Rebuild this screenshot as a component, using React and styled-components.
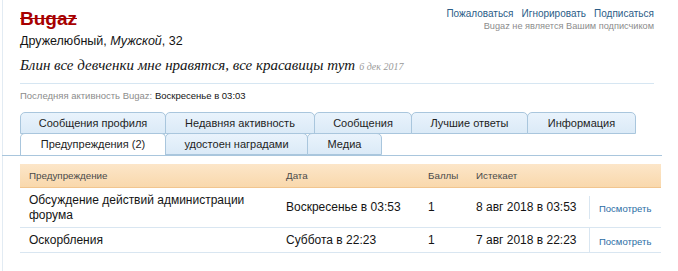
import React from 'react';
import styled, { createGlobalStyle } from 'styled-components';

const GlobalStyle = createGlobalStyle`
  body {
    margin: 0;
    background: #fff;
    font-family: "Liberation Sans", Arial, sans-serif;
    color: #141414;
  }
`;

const Page = styled.div`
  width: 678px;
  height: 271px;
  overflow: hidden;
  box-sizing: border-box;
  padding-left: 2px;
`;

const Frame = styled.div`
  border-left: 1px solid #e2ebf3;
  padding: 7px 16px 0 17px;
  height: 100%;
  box-sizing: border-box;
`;

const Header = styled.div`
  display: flex;
  justify-content: space-between;
  padding-right: 8px;
`;

const UserName = styled.h1`
  margin: 0;
  font-family: "Liberation Sans", Arial, sans-serif;
  font-size: 19px;
  line-height: 24px;
  font-weight: bold;
  color: #a70000;
  text-decoration: line-through;
`;

const Info = styled.div`
  font-size: 12.5px;
  line-height: 16px;
  margin-top: 2px;
  em { font-style: italic; }
`;

const Actions = styled.div`
  text-align: right;
`;

const LinkRow = styled.div`
  display: flex;
  gap: 8px;
  justify-content: flex-end;
`;

const ActionLink = styled.a`
  font-size: 10px;
  line-height: 13px;
  color: #2b5d87;
  text-decoration: none;
`;

const FollowNote = styled.div`
  font-size: 9.2px;
  line-height: 12px;
  color: #8c8c8c;
`;

const Status = styled.div`
  font-family: "Liberation Serif", "DejaVu Serif", serif;
  font-style: italic;
  font-size: 15px;
  line-height: 18px;
  margin-top: 7px;
  color: #141414;
`;

const StatusDate = styled.span`
  font-size: 10px;
  color: #9a9a9a;
  margin-left: 4px;
`;

const Divider = styled.hr`
  border: 0;
  border-top: 1px solid #d6e6f2;
  margin: 7px 8px 0 0;
`;

const LastSeen = styled.div`
  font-size: 9.5px;
  line-height: 13px;
  margin-top: 5px;
  color: #8c8c8c;
  span { color: #141414; }
`;

const TabBar = styled.div`
  margin: 10px 0 0 -18px;
  padding-left: 18px;
  border-bottom: 1px solid #a9c6dd;
`;

const TabRow = styled.div`
  display: flex;
  margin-top: ${p => (p.$back ? '0' : '-1px')};
`;

const Tab = styled.div`
  width: ${p => p.$w}px;
  box-sizing: border-box;
  height: 22px;
  margin-bottom: ${p => (p.$active ? '-1px' : '0')};
  border: 1px solid #a9c6dd;
  border-bottom: ${p => (p.$active ? 'none' : '1px solid #a9c6dd')};
  border-radius: 5px 5px 0 0;
  margin-right: -1px;
  background: ${p => (p.$active ? '#fff' : 'linear-gradient(#e9f3fc, #dbeaf7)')};
  font-size: 11px;
  line-height: 20px;
  text-align: center;
  color: #1e1e1e;
  position: relative;
  z-index: ${p => (p.$active ? 2 : 1)};
`;

const Table = styled.table`
  width: 641px;
  margin-top: 8px;
  border-collapse: collapse;
  table-layout: fixed;
`;

const HeadCell = styled.th`
  width: ${p => p.$w}px;
  box-sizing: border-box;
  background: linear-gradient(#fce6c9, #f9d8ac);
  border-bottom: 1px solid #f1c58f;
  font-weight: normal;
  text-align: left;
  font-size: 9.8px;
  color: #4a4a4a;
  height: 23px;
  padding: 0 0 0 9px;
`;

const Row = styled.tr`
  border-bottom: 1px solid #d9e6f1;
`;

const Cell = styled.td`
  font-size: 12px;
  line-height: 15px;
  padding: 5px 6px 4px 9px;
  height: ${p => p.$h}px;
  box-sizing: border-box;
  vertical-align: middle;
`;

const ViewCell = styled.td`
  padding: 0 0 0 10px;
  vertical-align: middle;
  position: relative;
  &::before {
    content: '';
    position: absolute;
    left: 0;
    top: ${p => p.$inset}px;
    bottom: ${p => p.$inset}px;
    border-left: 1px solid #d9e6f1;
  }
`;

const ViewLink = styled.a`
  font-size: 9.5px;
  color: #2b6ea5;
  text-decoration: none;
`;

const tabsBack = [
  ['Сообщения профиля', 146],
  ['Недавняя активность', 150],
  ['Сообщения', 98],
  ['Лучшие ответы', 117],
  ['Информация', 109],
];

const tabsFront = [
  ['Предупреждения (2)', 146, true],
  ['удостоен наградами', 143],
  ['Медиа', 75],
];

const warnings = [
  { title: 'Обсуждение действий администрации форума', date: 'Воскресенье в 03:53', points: 1, expires: '8 авг 2018 в 03:53', h: 40, inset: 8 },
  { title: 'Оскорбления', date: 'Суббота в 22:23', points: 1, expires: '7 авг 2018 в 22:23', h: 25, inset: 0 },
];

export default function App() {
  return (
    <Page>
      <GlobalStyle />
      <Frame>
        <Header>
          <div>
            <UserName>Bugaz</UserName>
            <Info>Дружелюбный, <em>Мужской</em>, 32</Info>
          </div>
          <Actions>
            <LinkRow>
              <ActionLink href="#">Пожаловаться</ActionLink>
              <ActionLink href="#">Игнорировать</ActionLink>
              <ActionLink href="#">Подписаться</ActionLink>
            </LinkRow>
            <FollowNote>Bugaz не является Вашим подписчиком</FollowNote>
          </Actions>
        </Header>

        <Status>
          Блин все девченки мне нравятся, все красавицы тут
          <StatusDate>6 дек 2017</StatusDate>
        </Status>
        <Divider />
        <LastSeen>Последняя активность Bugaz: <span>Воскресенье в 03:03</span></LastSeen>

        <TabBar>
          <TabRow $back>
            {tabsBack.map(([label, w]) => (
              <Tab key={label} $w={w}>{label}</Tab>
            ))}
          </TabRow>
          <TabRow>
            {tabsFront.map(([label, w, active]) => (
              <Tab key={label} $w={w} $active={active}>{label}</Tab>
            ))}
          </TabRow>
        </TabBar>

        <Table>
          <thead>
            <tr>
              <HeadCell $w={257}>Предупреждение</HeadCell>
              <HeadCell $w={142}>Дата</HeadCell>
              <HeadCell $w={48}>Баллы</HeadCell>
              <HeadCell $w={122}>Истекает</HeadCell>
              <HeadCell $w={72}></HeadCell>
            </tr>
          </thead>
          <tbody>
            {warnings.map(w => (
              <Row key={w.title}>
                <Cell $h={w.h}>{w.title}</Cell>
                <Cell $h={w.h}>{w.date}</Cell>
                <Cell $h={w.h}>{w.points}</Cell>
                <Cell $h={w.h}>{w.expires}</Cell>
                <ViewCell $inset={w.inset}><ViewLink href="#">Посмотреть</ViewLink></ViewCell>
              </Row>
            ))}
          </tbody>
        </Table>
      </Frame>
    </Page>
  );
}
